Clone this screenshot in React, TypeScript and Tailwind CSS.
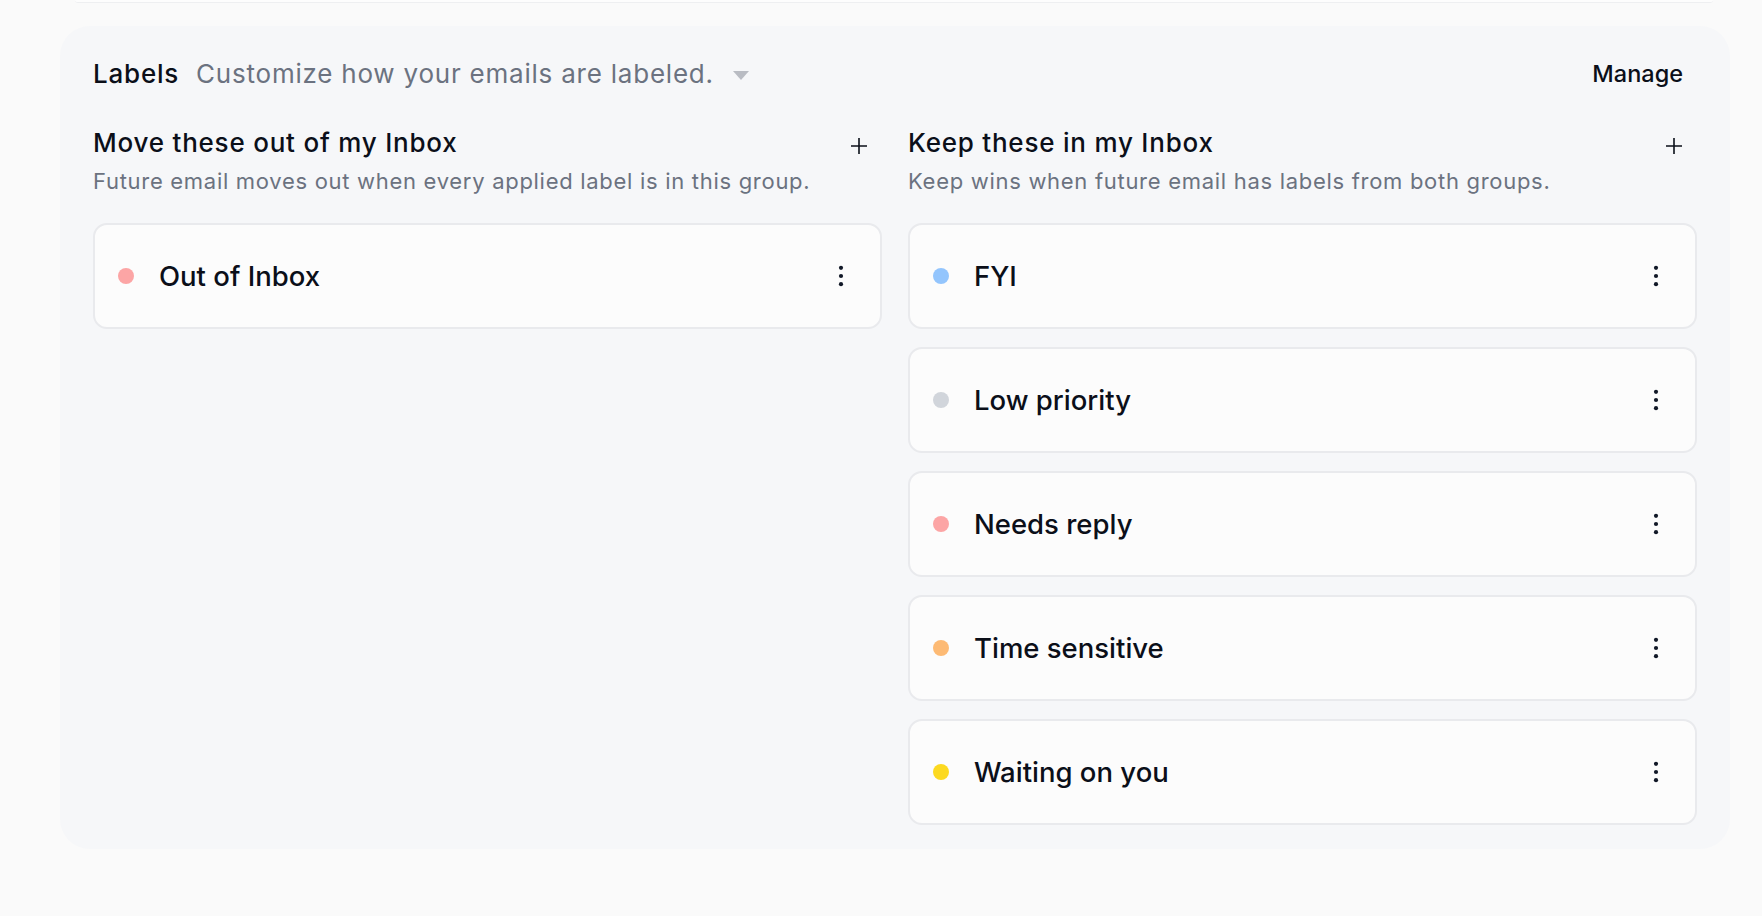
import React from "react";

type Label = { name: string; color: string };

const outOfInbox: Label[] = [{ name: "Out of Inbox", color: "bg-[#fca5a5]" }];

const keepInInbox: Label[] = [
  { name: "FYI", color: "bg-[#93c5fd]" },
  { name: "Low priority", color: "bg-[#d1d5db]" },
  { name: "Needs reply", color: "bg-[#fca5a5]" },
  { name: "Time sensitive", color: "bg-[#fdba74]" },
  { name: "Waiting on you", color: "bg-[#fcd920]" },
];

function PlusIcon() {
  return (
    <svg width="18" height="18" viewBox="0 0 18 18" fill="none" className="text-[#0b0f19]">
      <path d="M9 1v16M1 9h16" stroke="currentColor" strokeWidth="1.6" />
    </svg>
  );
}

function KebabIcon() {
  return (
    <svg width="6" height="22" viewBox="0 0 6 22" className="text-[#111827]">
      <circle cx="3" cy="2.8" r="2.1" fill="currentColor" />
      <circle cx="3" cy="11" r="2.1" fill="currentColor" />
      <circle cx="3" cy="19.2" r="2.1" fill="currentColor" />
    </svg>
  );
}

function LabelCard({ label }: { label: Label }) {
  return (
    <div className="flex h-[106px] items-center rounded-[14px] border-2 border-[#e9eaed] bg-[#fcfcfc] pl-[23px] pr-[36px]">
      <span className={`h-4 w-4 shrink-0 rounded-full ${label.color}`} />
      <span className="ml-[25px] flex-1 text-[27.5px] font-medium leading-[40px] text-[#0b0f19]">
        {label.name}
      </span>
      <KebabIcon />
    </div>
  );
}

function Group({
  title,
  description,
  labels,
}: {
  title: string;
  description: string;
  labels: Label[];
}) {
  return (
    <div className="flex flex-col">
      <div className="flex items-start justify-between pr-[14px]">
        <div className="flex flex-col">
          <h3 className="text-[26px] font-medium leading-[40px] tracking-[0.03em] text-[#0b0f19]">
            {title}
          </h3>
          <p className="mt-[2px] text-[22px] leading-[32px] tracking-[0.032em] text-[#6b7280]">
            {description}
          </p>
        </div>
        <div className="mt-[14px]">
          <PlusIcon />
        </div>
      </div>
      <div className="mt-[26px] flex flex-col gap-[18px]">
        {labels.map((l) => (
          <LabelCard key={l.name} label={l} />
        ))}
      </div>
    </div>
  );
}

export default function App() {
  return (
    <div
      className="min-h-screen w-full bg-[#fafafa]"
      style={{ fontFamily: "Inter, 'Noto Sans', sans-serif" }}
    >
      {/* bottom edge of the settings card above */}
      <div className="ml-[75px] mr-[49px] h-[3px] rounded-b-[3px] border-b border-[#eeeff1] bg-[#fdfdfd]" />

      <section className="ml-[60px] mr-[32px] mt-[23px] rounded-[30px] bg-[#f6f7f9] px-[33px] pb-[24px] pt-[30px]">
        <div className="flex items-center justify-between pr-[14px]">
          <div className="flex items-center">
            <span className="text-[26px] font-medium leading-[36px] tracking-[0.03em] text-[#0b0f19]">
              Labels
            </span>
            <span className="ml-[17px] text-[26px] leading-[36px] tracking-[0.03em] text-[#6b7280]">
              Customize how your emails are labeled.
            </span>
            <svg width="16" height="9" viewBox="0 0 16 9" className="ml-[19px] mt-[2px]">
              <path d="M0 0h16L8 9z" fill="#b9bcc3" />
            </svg>
          </div>
          <button className="text-[23.5px] font-medium leading-[36px] text-[#0b0f19]">Manage</button>
        </div>

        <div className="mt-[31px] grid grid-cols-2 gap-[26px]">
          <Group
            title="Move these out of my Inbox"
            description="Future email moves out when every applied label is in this group."
            labels={outOfInbox}
          />
          <Group
            title="Keep these in my Inbox"
            description="Keep wins when future email has labels from both groups."
            labels={keepInInbox}
          />
        </div>
      </section>
    </div>
  );
}
